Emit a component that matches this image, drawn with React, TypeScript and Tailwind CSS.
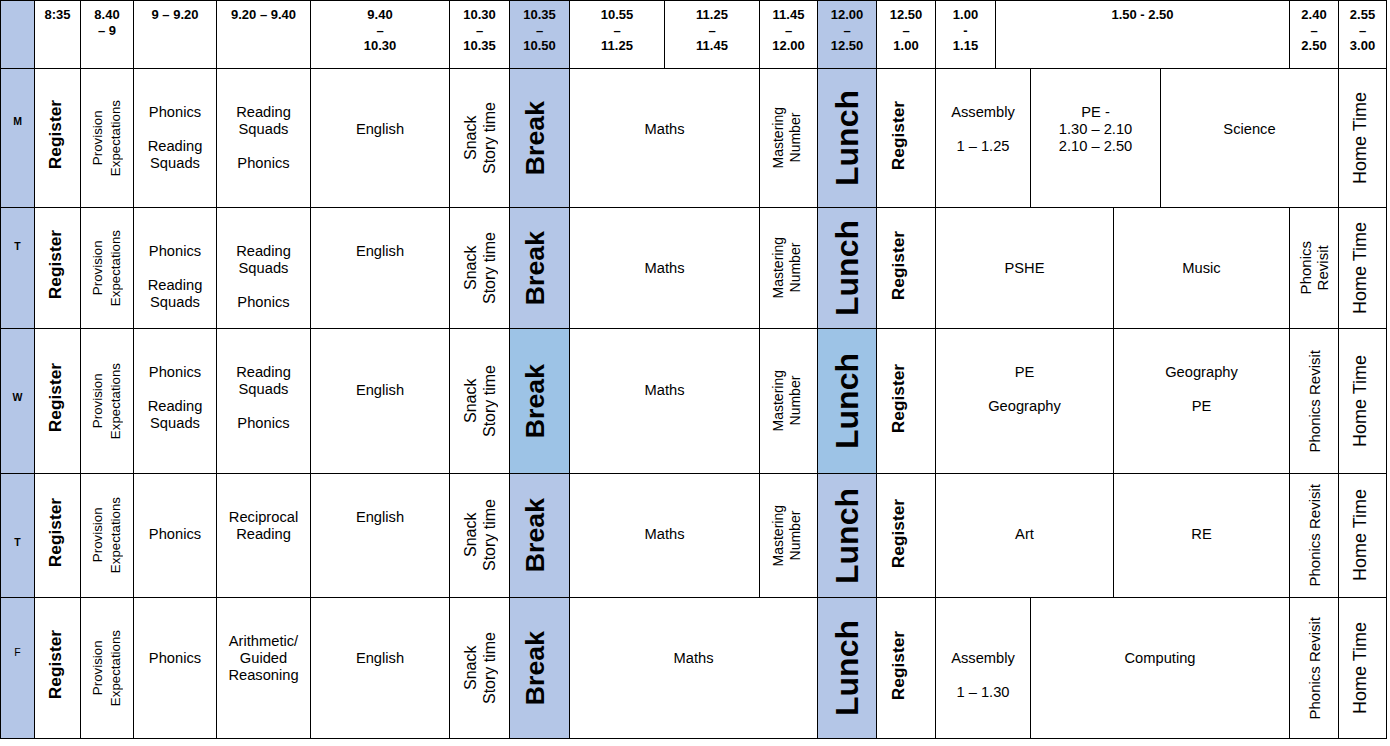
import React from 'react';

type Cell = {
  span?: number;
  lines?: string[];
  vertical?: boolean;
  bg?: string;
  text?: string;
  pt?: string;
  nudge?: string;
};

const BLUE = 'bg-[#b4c6e7]';
const SKY = 'bg-[#9dc3e6]';

const SPAN: Record<number, string> = {
  1: 'col-span-1',
  2: 'col-span-2',
  3: 'col-span-3',
  4: 'col-span-4',
};

// ─── Shared cells ─────────────────────────────────────────
const reg: Cell = { vertical: true, lines: ['Register'], text: 'text-[17.3px] font-bold leading-[20px]', nudge: 'pr-[6px] pb-[6px]' };
const reg2: Cell = { ...reg, nudge: 'pr-[16px] pb-[4px]' };
const prov: Cell = { vertical: true, lines: ['Provision', 'Expectations'], text: 'text-[13.3px] leading-[18px]' };
const snack: Cell = { vertical: true, lines: ['Snack', 'Story time'], text: 'text-[16px] leading-[19px]' };
const brk = (bg = BLUE): Cell => ({ vertical: true, lines: ['Break'], bg, text: 'text-[26.7px] font-bold leading-[30px]', nudge: 'pr-[9px]' });
const mast: Cell = { vertical: true, lines: ['Mastering', 'Number'], text: 'text-[14px] leading-[17px]', nudge: 'pr-[3px]' };
const lunch = (bg = BLUE): Cell => ({ vertical: true, lines: ['Lunch'], bg, text: 'text-[32px] font-bold leading-[36px]' });
const home: Cell = { vertical: true, lines: ['Home Time'], text: 'text-[18px] leading-[21px]', nudge: 'pr-[5px]' };
const revisit: Cell = { vertical: true, lines: ['Phonics Revisit'], text: 'text-[15px] leading-[17px]' };
const day = (l: string, pt: string, bold = true): Cell => ({
  lines: [l], bg: BLUE, pt, text: bold ? 'text-[10.5px] font-bold leading-[16px]' : 'text-[10.5px] leading-[16px]',
});
const h = (lines: string[], pt: string, span = 1): Cell => ({ lines, pt, span });

const phonicsBlock = ['Phonics', '', 'Reading', 'Squads'];
const readingBlock = ['Reading', 'Squads', '', 'Phonics'];

const header: Cell[] = [
  { bg: BLUE },
  { lines: ['8:35'] },
  { lines: ['8.40', '– 9'] },
  { lines: ['9 – 9.20'] },
  { lines: ['9.20 – 9.40'] },
  { lines: ['9.40', '–', '10.30'] },
  { lines: ['10.30', '–', '10.35'] },
  { lines: ['10.35', '–', '10.50'], bg: BLUE },
  { lines: ['10.55', '–', '11.25'] },
  { lines: ['11.25', '–', '11.45'] },
  { lines: ['11.45', '–', '12.00'] },
  { lines: ['12.00', '–', '12.50'], bg: BLUE },
  { lines: ['12.50', '–', '1.00'] },
  { lines: ['1.00', '-', '1.15'] },
  { lines: ['1.50 - 2.50'], span: 4 },
  { lines: ['2.40', '–', '2.50'] },
  { lines: ['2.55', '–', '3.00'] },
].map(c => ({ ...c, pt: 'pt-[6px]', text: 'text-[13px] font-bold leading-[15.5px]' }));

const rows: Cell[][] = [
  [
    day('M', 'pt-[44px]'), reg, prov,
    h(phonicsBlock, 'pt-[35px]'), h(readingBlock, 'pt-[35px]'), h(['English'], 'pt-[52px]'),
    snack, brk(), h(['Maths'], 'pt-[52px]', 2), mast, lunch(), reg2,
    h(['Assembly', '', '1 – 1.25'], 'pt-[35px]', 2),
    h(['PE -', '1.30 – 2.10', '2.10 – 2.50'], 'pt-[35px]', 2),
    h(['Science'], 'pt-[52px]', 2), home,
  ],
  [
    day('T', 'pt-[30px]'), reg, prov,
    h(phonicsBlock, 'pt-[35px]'), h(readingBlock, 'pt-[35px]'), h(['English'], 'pt-[35px]'),
    snack, brk(), h(['Maths'], 'pt-[52px]', 2), mast, lunch(), reg2,
    h(['PSHE'], 'pt-[52px]', 3), h(['Music'], 'pt-[52px]', 2),
    { ...revisit, lines: ['Phonics', 'Revisit'] }, home,
  ],
  [
    day('W', 'pt-[60px]'), reg, prov,
    h(phonicsBlock, 'pt-[35px]'), h(readingBlock, 'pt-[35px]'), h(['English'], 'pt-[53px]'),
    snack, brk(SKY), h(['Maths'], 'pt-[53px]', 2), mast, lunch(SKY), reg2,
    h(['PE', '', 'Geography'], 'pt-[35px]', 3), h(['Geography', '', 'PE'], 'pt-[35px]', 2),
    revisit, home,
  ],
  [
    day('T', 'pt-[60px]'), reg, prov,
    h(['Phonics'], 'pt-[52px]'), h(['Reciprocal', 'Reading'], 'pt-[35px]'), h(['English'], 'pt-[35px]'),
    snack, brk(), h(['Maths'], 'pt-[52px]', 2), mast, lunch(), reg2,
    h(['Art'], 'pt-[52px]', 3), h(['RE'], 'pt-[52px]', 2),
    revisit, home,
  ],
  [
    day('F', 'pt-[46px]', false), reg, prov,
    h(['Phonics'], 'pt-[52px]'), h(['Arithmetic/', 'Guided', 'Reasoning'], 'pt-[35px]'), h(['English'], 'pt-[52px]'),
    snack, brk(), h(['Maths'], 'pt-[52px]', 3), lunch(), reg2,
    h(['Assembly', '', '1 – 1.30'], 'pt-[52px]', 2),
    h(['Computing'], 'pt-[52px]', 3),
    revisit, home,
  ],
];

const GridCell: React.FC<{ cell: Cell }> = ({ cell }) => {
  const { span = 1, lines = [], vertical, bg = 'bg-white', text = 'text-[14.7px] leading-[17px]', pt = '', nudge = '' } = cell;
  if (vertical) {
    return (
      <div className={`${SPAN[span]} ${bg} ${nudge} flex items-center justify-center`}>
        <div className={`[writing-mode:vertical-rl] rotate-180 text-center whitespace-nowrap ${text}`}>
          {lines.map((l, i) => <div key={i}>{l}</div>)}
        </div>
      </div>
    );
  }
  return (
    <div className={`${SPAN[span]} ${bg} ${pt} flex flex-col items-center text-center whitespace-nowrap ${text}`}>
      {lines.map((l, i) => <div key={i}>{l || '\u00a0'}</div>)}
    </div>
  );
};

export default function App() {
  return (
    <div className="w-[1390px] h-[746px] bg-white text-black font-['Liberation_Sans',Arial,sans-serif]">
      <div className="grid w-fit gap-px p-px bg-black grid-cols-[33px_45px_52px_82px_93px_138px_59px_59px_94px_94px_57px_58px_58px_59px_34px_82px_46px_128px_48px_47px] grid-rows-[67px_138px_120px_144px_123px_140px]">
        {header.map((c, i) => <GridCell key={`h${i}`} cell={c} />)}
        {rows.map((row, r) => row.map((c, i) => <GridCell key={`${r}-${i}`} cell={c} />))}
      </div>
    </div>
  );
}
